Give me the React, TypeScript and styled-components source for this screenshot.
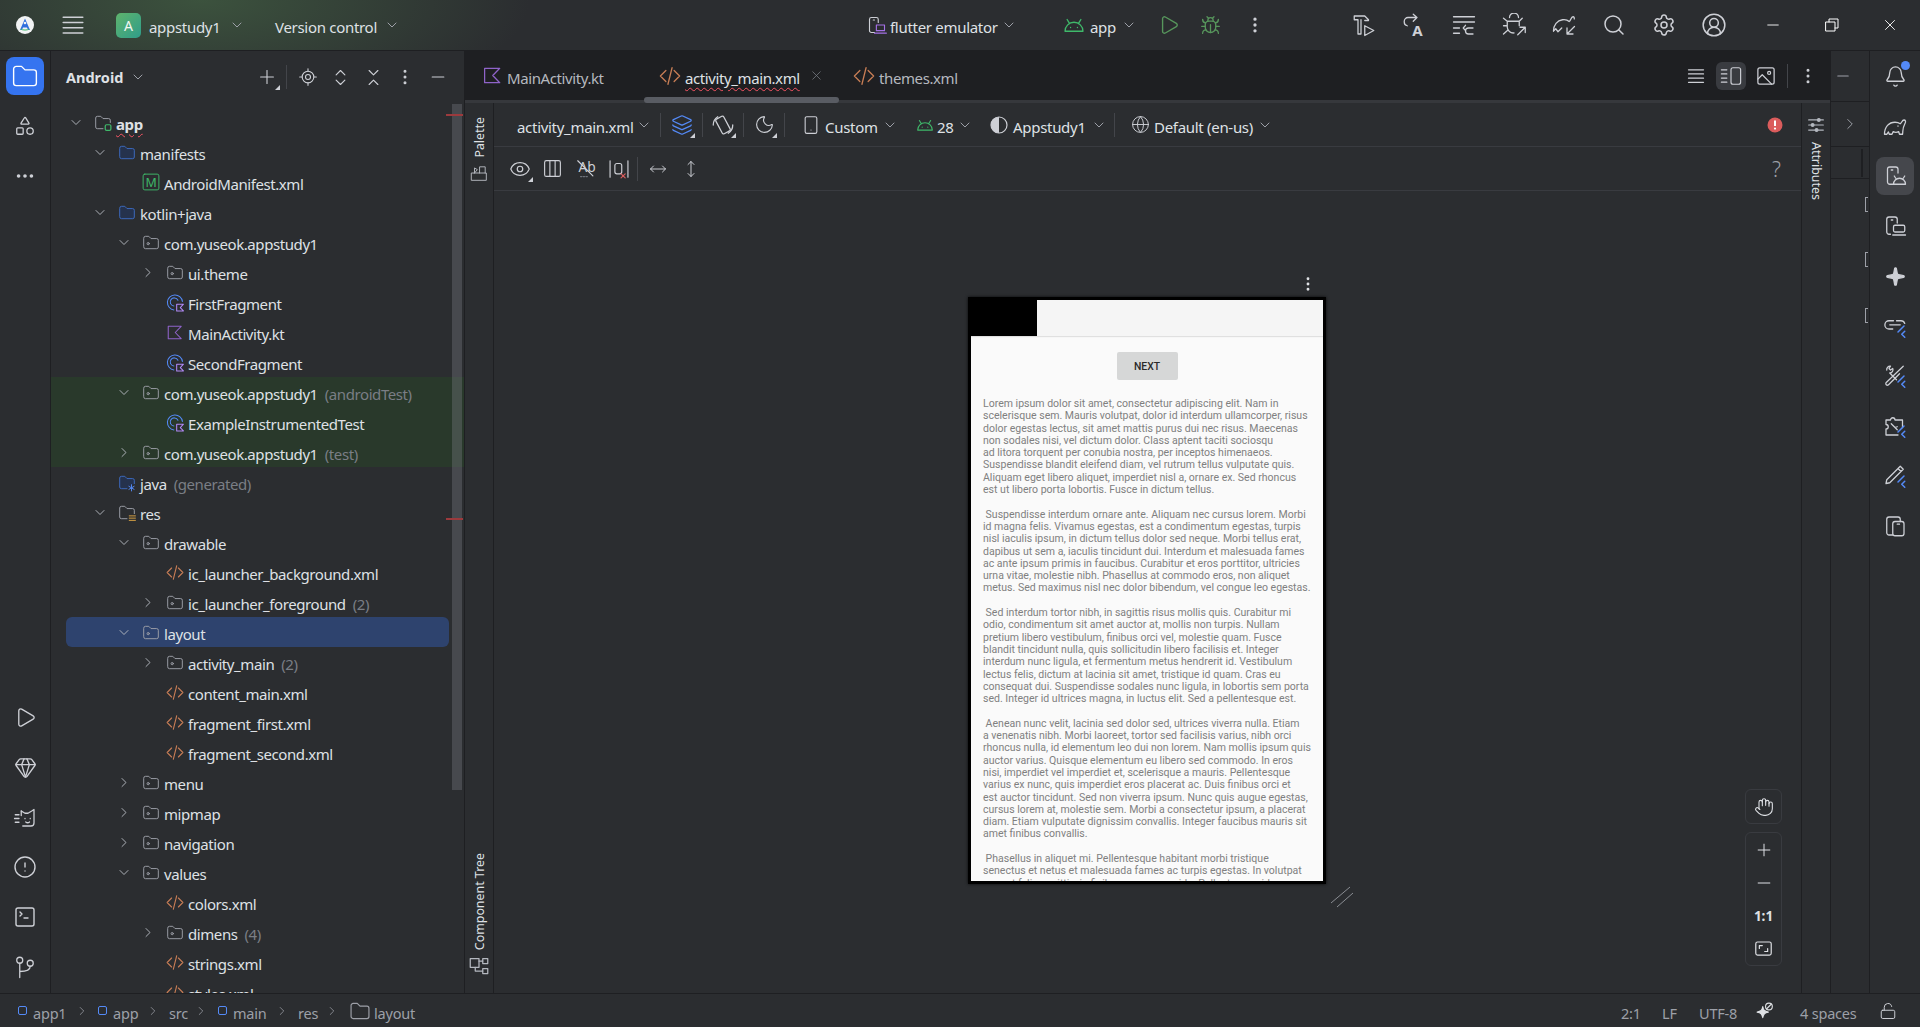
import React from 'react'
import styled, { createGlobalStyle } from 'styled-components'
import {
  Bell, Bug, ChevronDown, ChevronRight, ChevronsDownUp, ChevronsUpDown, CircleAlert, CircleUserRound,
  Columns3, Ellipsis, EllipsisVertical, Eye, Gem, Globe, Hand, Layers, LocateFixed, LockOpen, Minus,
  MoveHorizontal, MoveVertical, Moon, Play, Plus, Search, Settings, Shapes, Smartphone, Sparkle,
  SquareTerminal, X,
} from 'lucide-react'

const GlobalStyle = createGlobalStyle`
  html, body, #root { margin: 0; height: 100%; }
  body {
    background: #2b2d30;
    overflow: hidden;
    font-family: "Noto Sans", "Liberation Sans", sans-serif;
    font-size: 15px;
    color: #dfe1e5;
  }
`

const Window = styled.div`
  display: flex;
  flex-direction: column;
  height: 1027px;
  width: 1920px;
  overflow: hidden;
`
const TitleBar = styled.div`
  height: 50px;
  flex: none;
  display: flex;
  align-items: center;
  border-bottom: 1px solid #1e1f22;
  background:
    radial-gradient(ellipse 330px 120px at 200px 0px, rgba(70, 105, 70, 0.62), rgba(70, 105, 70, 0) 100%),
    #2b2d30;
`
const Cell = styled.div<{ $w: number; $tone?: string }>`
  width: ${p => p.$w}px;
  flex: none;
  height: 100%;
  display: flex;
  align-items: center;
  justify-content: center;
  position: relative;
  color: ${p => p.$tone || '#ced0d6'};
`
const Group = styled.div<{ $w: number; $gap?: number; $pl?: number }>`
  width: ${p => p.$w}px;
  flex: none;
  display: flex;
  align-items: center;
  gap: ${p => p.$gap ?? 6}px;
  padding-left: ${p => p.$pl ?? 0}px;
  box-sizing: border-box;
  white-space: nowrap;
`
const Spacer = styled.div<{ $w?: number }>`
  flex: ${p => (p.$w === undefined ? 1 : 'none')};
  width: ${p => p.$w || 0}px;
`
const Badge = styled.div`
  width: 25px;
  height: 25px;
  border-radius: 5px;
  background: linear-gradient(135deg, #5fb36c, #2f9d8a);
  color: #f2f7f2;
  font-size: 14px;
  display: flex;
  align-items: center;
  justify-content: center;
`
const Label = styled.span`
  color: #dfe1e5;
  position: relative;
  top: 2px;
  font-size: 15px;
  letter-spacing: -0.3px;
`
const HelpMark = styled.span`
  color: #9da0a8;
  font-size: 21px;
  font-weight: 300;
`
const Chevron = styled(ChevronDown).attrs({ size: 16, strokeWidth: 1.5 })`
  color: #9da0a8;
  flex: none;
`
const Main = styled.div`
  flex: 1;
  min-height: 0;
  display: flex;
`
const Rail = styled.div<{ $side: 'left' | 'right' }>`
  width: 50px;
  flex: none;
  display: flex;
  flex-direction: column;
  align-items: center;
  padding-bottom: 1px;
  border-${p => (p.$side === 'left' ? 'right' : 'left')}: 1px solid #1e1f22;
  background: #2b2d30;
  color: #ced0d6;
`
const RailButton = styled.div<{ $active?: 'blue' | 'gray' }>`
  width: 38px;
  height: 38px;
  margin: 6px 0;
  flex: none;
  border-radius: 8px;
  display: flex;
  align-items: center;
  justify-content: center;
  position: relative;
  background: ${p => (p.$active === 'blue' ? '#3574f0' : p.$active === 'gray' ? '#45474c' : 'transparent')};
  color: ${p => (p.$active === 'blue' ? '#fff' : '#ced0d6')};
`
const RailGap = styled.div`
  margin-top: auto;
`
const BellDot = styled.span`
  position: absolute;
  top: 4px;
  right: 4px;
  width: 9px;
  height: 9px;
  border-radius: 50%;
  background: #548af7;
`
const ProjectPanel = styled.div`
  width: 413px;
  flex: none;
  position: relative;
  overflow: hidden;
  border-right: 1px solid #1e1f22;
`
const PanelHeader = styled.div`
  height: 56px;
  display: flex;
  align-items: center;
  padding-bottom: 4px;
  box-sizing: border-box;
  & > div {
    height: 100%;
  }
`
const PanelTitle = styled.div`
  font-weight: 700;
  font-size: 14.5px;
  margin-right: 2px;
`
const Divider = styled.div<{ $h?: number }>`
  width: 1px;
  height: ${p => p.$h ?? 24}px !important;
  flex: none;
  background: #43454a;
`
const Corner = styled.span`
  position: absolute;
  right: 50%;
  bottom: 50%;
  transform: translate(13px, 13px);
  width: 0;
  height: 0;
  border-left: 5px solid transparent;
  border-bottom: 5px solid #ced0d6;
`
const Tree = styled.div`
  display: flex;
  flex-direction: column;
`
const Row = styled.div<{ $level: number; $tone?: 'test' | 'selected' }>`
  height: 30px;
  flex: none;
  display: flex;
  align-items: center;
  box-sizing: border-box;
  padding-left: ${p => 17 + p.$level * 24}px;
  position: relative;
  white-space: nowrap;
  background: ${p => (p.$tone === 'test' ? '#29392b' : 'transparent')};
  &::before {
    content: ${p => (p.$tone === 'selected' ? '""' : 'none')};
    position: absolute;
    left: 15px;
    width: 383px;
    top: 0;
    bottom: 0;
    border-radius: 6px;
    background: #2e436e;
  }
  & > * {
    position: relative;
  }
`
const Twist = styled.span`
  width: 16px;
  flex: none;
  display: flex;
  justify-content: center;
  color: #b4b8bf;
  margin-right: 10px;
`
const NodeIcon = styled.span`
  width: 18px;
  height: 18px;
  flex: none;
  margin-right: 4px;
  display: flex;
  align-items: center;
  justify-content: center;
`
const NodeText = styled.span<{ $bold?: boolean }>`
  font-size: 15px;
  position: relative;
  top: 2px;
  font-weight: ${p => (p.$bold ? 700 : 400)};
  letter-spacing: -0.42px;
  ${p => p.$bold && 'text-decoration: underline wavy #f75464 1px; text-underline-offset: 3px;'}
`
const Hint = styled.span`
  color: #7a7e85;
  margin-left: 7px;
`
const ScrollThumb = styled.div`
  position: absolute;
  left: 401px;
  top: 53px;
  width: 10px;
  height: 686px;
  background: rgba(122, 126, 133, 0.36);
`
const ErrorStripe = styled.div<{ $top: number }>`
  position: absolute;
  left: 395px;
  width: 17px;
  height: 2px;
  top: ${p => p.$top}px;
  background: #9c3a3d;
`
const Editor = styled.div`
  flex: 1;
  min-width: 0;
  display: flex;
  flex-direction: column;
`
const TabBar = styled.div`
  height: 49px;
  flex: none;
  display: flex;
  align-items: center;
  background: #1e1f22;
  padding-left: 17px;
  position: relative;
  border-bottom: 3px solid #36383c;
`
const Tab = styled.div<{ $w: number }>`
  width: ${p => p.$w}px;
  flex: none;
  display: flex;
  align-items: center;
  gap: 4px;
  white-space: nowrap;
  position: relative;
`
const TabText = styled.span<{ $active?: boolean }>`
  color: ${p => (p.$active ? '#dfe1e5' : '#b5b8bf')};
  font-size: 15px;
  letter-spacing: -0.4px;
  position: relative;
  top: 2px;
  ${p => p.$active && 'text-decoration: underline wavy #f75464 1px; text-underline-offset: 3px; margin-right: 5px;'}
`
const TabThumb = styled.div`
  position: absolute;
  left: 179px;
  width: 195px;
  bottom: -3px;
  height: 6px;
  border-radius: 3px;
  background: #595c63;
`
const TabAction = styled.div<{ $active?: boolean }>`
  width: 30px;
  height: 28px;
  flex: none;
  border-radius: 6px;
  margin-right: 5px;
  display: flex;
  align-items: center;
  justify-content: center;
  color: #ced0d6;
  background: ${p => (p.$active ? '#393b40' : 'transparent')};
`
const Designer = styled.div`
  flex: 1;
  min-height: 0;
  display: flex;
`
const SideStrip = styled.div<{ $side: 'left' | 'right' }>`
  width: 29px;
  flex: none;
  display: flex;
  flex-direction: column;
  align-items: center;
  gap: ${p => (p.$side === 'left' ? 6 : 8)}px;
  box-sizing: border-box;
  padding: ${p => (p.$side === 'left' ? '14px 0 17px' : '13px 0')};
  border-${p => (p.$side === 'left' ? 'right' : 'left')}: 1px solid #1e1f22;
  color: #b4b8bf;
`
const VerticalText = styled.div<{ $flip?: boolean }>`
  writing-mode: vertical-rl;
  font-family: "Noto Sans", sans-serif;
  font-size: 12.4px;
  color: #dfe1e5;
  white-space: nowrap;
  ${p => p.$flip && 'transform: rotate(180deg);'}
`
const StripPush = styled.div`
  margin-top: auto;
`
const DesignColumn = styled.div`
  flex: 1;
  min-width: 0;
  display: flex;
  flex-direction: column;
`
const ToolRow = styled.div<{ $h: number; $pl: number }>`
  height: ${p => p.$h}px;
  flex: none;
  display: flex;
  align-items: center;
  padding-left: ${p => p.$pl}px;
  border-bottom: 1px solid #393b40;
  white-space: nowrap;
`
const Canvas = styled.div`
  flex: 1;
  min-height: 0;
  position: relative;
  overflow: hidden;
`
const DeviceFrame = styled.div`
  margin: 106px 0 0 474px;
  width: 352px;
  height: 581px;
  border: 3px solid #000;
  box-shadow: 0 0 3px rgba(0, 0, 0, 0.8);
  background: #fafafa;
  overflow: hidden;
  display: flex;
  flex-direction: column;
`
const AppBar = styled.div`
  height: 36px;
  flex: none;
  background: #f5f5f5;
  box-shadow: 0 1px 1px rgba(0, 0, 0, 0.1);
`
const StatusBlock = styled.div`
  width: 66px;
  height: 100%;
  background: #000;
`
const NextButton = styled.div`
  align-self: center;
  margin-top: 16px;
  width: 61px;
  height: 28px;
  flex: none;
  border-radius: 2px;
  background: #d6d7d7;
  color: #2a2a2a;
  font: 500 10.4px Roboto, sans-serif;
  display: flex;
  align-items: center;
  justify-content: center;
`
const Lorem = styled.div`
  margin: 18px 0 0 12px;
  font: 400 10.54px/12.29px Roboto, sans-serif;
  color: #808080;
  white-space: pre;
`
const DeviceMenu = styled.div`
  position: absolute;
  left: 805px;
  top: 84px;
  color: #dfe1e5;
  display: flex;
`
const ResizeHandle = styled.svg`
  position: absolute;
  left: 836px;
  top: 695px;
`
const ZoomBox = styled.div<{ $top: number }>`
  position: absolute;
  left: 1251px;
  top: ${p => p.$top}px;
  width: 35px;
  border: 1px solid #393b40;
  border-radius: 6px;
  display: flex;
  flex-direction: column;
  align-items: center;
  color: #ced0d6;
`
const ZoomItem = styled.div`
  height: 33px;
  width: 100%;
  display: flex;
  align-items: center;
  justify-content: center;
  font: 700 13.5px "Noto Sans", sans-serif;
  color: #dfe1e5;
`
const HiddenPanel = styled.div`
  width: 38px;
  flex: none;
  display: flex;
  flex-direction: column;
  overflow: hidden;
  color: #9da0a8;
  position: relative;
  border-left: 1px solid #1e1f22;
`
const HiddenCell = styled.div<{ $h: number }>`
  height: ${p => p.$h}px;
  flex: none;
  border-bottom: 1px solid #1e1f22;
  display: flex;
  align-items: center;
  justify-content: center;
`
const HiddenMinus = styled(Minus).attrs({ size: 18, strokeWidth: 1.4 })`
  margin-right: 14px;
`
const GutterBar = styled.div`
  width: 2px;
  height: 28px;
  background: #1e1f22;
  margin-left: 24px;
`
const GutterMark = styled.div<{ $top: number }>`
  position: absolute;
  right: 1px;
  top: ${p => p.$top}px;
  width: 2px;
  height: 13px;
  border: 1px solid #9da0a8;
  border-right: none;
`
const StatusBar = styled.div`
  height: 34px;
  flex: none;
  box-sizing: border-box;
  border-top: 1px solid #1e1f22;
  display: flex;
  align-items: center;
  padding-left: 18px;
  white-space: nowrap;
  color: #9da0a8;
`
const Crumb = styled.div<{ $w: number; $gap?: number }>`
  width: ${p => p.$w}px;
  flex: none;
  display: flex;
  align-items: center;
  gap: ${p => p.$gap ?? 6}px;
`
const ModSquare = styled.span`
  width: 9px;
  height: 9px;
  flex: none;
  box-sizing: border-box;
  border: 1.5px solid #548af7;
  border-radius: 2px;
`
const StatusText = styled.span<{ $w: number }>`
  width: ${p => p.$w}px;
  flex: none;
  position: relative;
  top: 2px;
  font-size: 14.5px;
  letter-spacing: -0.2px;
`

const Svg: React.FC<{ size?: number; children: React.ReactNode; color?: string; sw?: number }> = ({
  size = 21, children, color = 'currentColor', sw = 0.85,
}) => (
  <svg width={size} height={size} viewBox="0 0 16 16" fill="none" stroke={color} strokeWidth={sw} strokeLinecap="round" strokeLinejoin="round">
    {children}
  </svg>
)

const FOLDER = 'M1.5 4A1.5 1.5 0 0 1 3 2.5h3l2 2h5A1.5 1.5 0 0 1 14.5 6v6A1.5 1.5 0 0 1 13 13.5H3A1.5 1.5 0 0 1 1.5 12z'
const ELEPHANT = 'M1 13.5c0-5 3-8 7-8 1.5 0 2.7.4 3.5 1 1-.6 1.2-2.5 2.5-2.5 1 0 1.3 1 .8 2-.8 1.6-1.6 3-1.6 5.5 0 1-.2 2-.2 2h-2l-.6-1.8c-1 .6-2.6.6-3.6 0l-.8 1.8H4.2l-.6-1.6-1 1.6z'

const BlueFolder = () => <Svg color="#3d6bc0"><path d={FOLDER} fill="#25324d" /></Svg>
const PackageFolder = () => <Svg color="#9da0a8"><path d={FOLDER} /><circle cx="5.5" cy="9" r="1" /></Svg>
const ModuleFolder = () => (
  <Svg color="#9da0a8">
    <path d="M8 13.5H3A1.5 1.5 0 0 1 1.5 12V4A1.5 1.5 0 0 1 3 2.5h3l2 2h5A1.5 1.5 0 0 1 14.5 6v2" />
    <rect x="10" y="10" width="5" height="5" rx="1.2" stroke="#3fb96a" strokeWidth="1.1" />
  </Svg>
)
const ResFolder = () => (
  <Svg color="#9da0a8">
    <path d="M8 13.5H3A1.5 1.5 0 0 1 1.5 12V4A1.5 1.5 0 0 1 3 2.5h3l2 2h5A1.5 1.5 0 0 1 14.5 6v3" />
    <path d="M10 11h5.5M10 13h5.5M10 15h5.5" stroke="#d9a343" />
  </Svg>
)
const GeneratedFolder = () => (
  <Svg color="#3d6bc0">
    <path d="M8 13.5H3A1.5 1.5 0 0 1 1.5 12V4A1.5 1.5 0 0 1 3 2.5h3l2 2h5A1.5 1.5 0 0 1 14.5 6v3" fill="#25324d" />
    <path d="M12 10v5.5M9.7 11.4l4.6 2.7M14.3 11.4l-4.6 2.7" stroke="#548af7" />
  </Svg>
)
const KotlinMark: React.FC<{ size?: number }> = ({ size = 21 }) => (
  <Svg size={size} color="#8f63c9" sw={0.95}><path d="M2 2.5h11.5L8.2 8l5.3 5.5H2z" /></Svg>
)
const KotlinClass = () => (
  <Svg color="#548af7" sw={0.95}>
    <path d="M14.6 7A6.7 6.7 0 1 0 7 14.6" />
    <path d="M10.6 6A3.6 3.6 0 1 0 7 11.1" />
    <path d="M9.5 9.5h6l-2.8 3 2.8 3h-6z" stroke="#b189f5" fill="#2b2d30" />
  </Svg>
)
const XmlIcon: React.FC<{ size?: number }> = ({ size = 21 }) => (
  <Svg size={size} color="#c77d55" sw={0.95}>
    <path d="M5 4 1 8l4 4M11 4l4 4-4 4M9.5 2 6.5 14" />
  </Svg>
)
const ManifestIcon = () => (
  <Svg size={18} color="#3fb96a">
    <rect x="1" y="1" width="14" height="14" rx="1.5" />
    <text x="8" y="12" textAnchor="middle" fontSize="11" stroke="none" fill="#3fb96a" fontFamily="Noto Sans">M</text>
  </Svg>
)
const Android: React.FC<{ size?: number }> = ({ size = 22 }) => (
  <Svg size={size} color="#3fb96a" sw={1}>
    <path d="M1.5 12.5a6.5 6.5 0 0 1 13 0zM4.5 6.5 3 4M11.5 6.5 13 4" />
    <path d="M5.5 9.8v.1M10.5 9.8v.1" />
  </Svg>
)
const Logo = () => (
  <svg width="18" height="18" viewBox="0 0 18 18">
    <circle cx="9" cy="9" r="9" fill="#f1f3f4" />
    <path d="M9 2.5 4 14h2l1-2.6h4L12 14h2z" fill="#2f6fdd" />
    <circle cx="9" cy="7" r="1.3" fill="#f1f3f4" />
    <path d="M5 13c1.2 1.4 6.8 1.4 8 0" stroke="#3fb96a" fill="none" />
  </svg>
)
const Hamburger = () => (
  <Svg size={24} sw={1.1}><path d="M1.5 2.8h13M1.5 6.3h13M1.5 9.8h13M1.5 13.3h13" /></Svg>
)
const DeviceManagerIcon = () => (
  <Svg size={24}>
    <path d="M7 13.5H4.5A1.5 1.5 0 0 1 3 12V3.5A1.5 1.5 0 0 1 4.5 2h4A1.5 1.5 0 0 1 10 3.5V6M5.5 4h1" />
    <path d="M7 13.5a4 4 0 0 1 8 0zM8.5 9.5 7.5 8M13.5 9.5l1-1.5" />
  </Svg>
)
const MirrorIcon = () => (
  <Svg size={24}>
    <path d="M5 13.5H4A1.5 1.5 0 0 1 2.5 12V3.5A1.5 1.5 0 0 1 4 2h4a1.5 1.5 0 0 1 1.5 1.5V6M5.5 4h1" />
    <rect x="7" y="7.5" width="7.5" height="4.5" rx="1" />
    <path d="M6.5 14h8.5" />
  </Svg>
)
const BlueTicks = () => <path d="M10 12l4-4M14.5 11.5 12.5 13.5l2 2" stroke="#548af7" strokeWidth="1" />
const LinkTickIcon = () => (
  <Svg size={24}>
    <path d="M7 4.5H4a2.7 2.7 0 0 0 0 5.500h2.500M4.500 7.200h7M9 4.500h3a2.700 2.700 0 0 1 2.500 1.800" />
    <BlueTicks />
  </Svg>
)
const ToolsIcon = () => (
  <Svg size={24}>
    <path d="M13.500 1.500 2 12.500a1.100 1.100 0 0 0 1.500 1.500L11 6.500" />
    <path d="M2.500 4A2.200 2.200 0 0 1 5 1.500L4 3l1 1 1.500-1A2.200 2.200 0 0 1 4.500 6L9 10.500" />
    <BlueTicks />
  </Svg>
)
const PuzzleIcon = () => (
  <Svg size={24}>
    <path d="M2 4h3a1.500 1.500 0 1 1 3 0h5v5M2 4v3a1.500 1.500 0 0 1 0 3v4h8" />
    <path d="M5.500 6.500 8 9l1.500-.5M8 9l1.500 1.500" />
    <BlueTicks />
  </Svg>
)
const PencilIcon = () => (
  <Svg size={24}>
    <path d="M11.500 1.500l2 2L4.500 12.500 2 13l.5-2.500zM10 3l2 2" />
    <BlueTicks />
  </Svg>
)
const PhonesIcon = () => (
  <Svg size={24}>
    <path d="M6.500 14H4a1.500 1.500 0 0 1-1.500-1.500v-9A1.500 1.500 0 0 1 4 2h6a1.500 1.500 0 0 1 1.500 1.500V5" />
    <rect x="6.500" y="5" width="7.500" height="9.500" rx="1.500" />
    <path d="M9.500 6.800h1.500" />
  </Svg>
)
const AbSlash = () => (
  <Svg size={22}>
    <text x="2.500" y="10" fontSize="10" stroke="none" fill="currentColor" fontFamily="Noto Sans">Ab</text>
    <path d="M2 2l11 11" />
    <path d="M4 13.500h6" stroke="#6f737a" strokeDasharray="1 1" />
  </Svg>
)
const SpacingIcon = () => (
  <Svg size={22}>
    <path d="M1.500 2v12M14.500 2v12" />
    <rect x="5" y="4" width="5" height="7.500" rx="1.500" />
    <path d="M9.500 11.500l3 3M12.500 11.500l-3 3" stroke="#db5c5c" />
  </Svg>
)
const RotateIcon = () => (
  <Svg size={24}>
    <rect x="5" y="2.500" width="6" height="11" rx="1" transform="rotate(-28 8 8)" />
    <path d="M1.500 8a6.500 6.500 0 0 1 3-5.500M14.500 8a6.500 6.500 0 0 1-3 5.500" />
  </Svg>
)
const HalfCircle = () => (
  <svg width="18" height="18" viewBox="0 0 18 18">
    <circle cx="9" cy="9" r="8" fill="none" stroke="#ced0d6" strokeWidth="1.2" />
    <path d="M9 1a8 8 0 0 0 0 16z" fill="#ced0d6" />
  </svg>
)
const ErrorDot = () => (
  <svg width="16" height="16" viewBox="0 0 16 16">
    <circle cx="8" cy="8" r="7.5" fill="#db5c5c" />
    <path d="M8 3.5v5.500" stroke="#fff" strokeWidth="2" />
    <circle cx="8" cy="11.6" r="1.1" fill="#fff" />
  </svg>
)
const ListIcon = () => (
  <Svg size={20} sw={1}><path d="M2 3h12M2 6.3h12M2 9.7h12M2 13h12" /></Svg>
)
const SplitIcon = () => (
  <Svg size={22}>
    <path d="M1 3.5h4M1 6.500h4M1 9.500h4M1 12.500h4" />
    <rect x="8" y="2" width="7" height="12" rx="1.5" />
  </Svg>
)
const ImageIcon = () => (
  <Svg size={20} sw={1}>
    <rect x="1.5" y="1.5" width="13" height="13" rx="1.5" />
    <circle cx="10.5" cy="5.5" r="1.2" />
    <path d="M1.5 10.5 5 7l7.500 7.500" />
  </Svg>
)
const StructureCatIcon = () => (
  <Svg size={24}>
    <path d="M5.5 4l2.500 1.500h2L12.500 4 14 3v9a2 2 0 0 1-2 2H6.500" />
    <path d="M5.5 4v3M1.500 6.500H4M1 9H4M1.500 11.500H4" />
    <path d="M8 9v.1M11.500 9v.1M8.500 11.300c.7.600 1.800.600 2.500 0" />
  </Svg>
)
const GitIcon = () => (
  <Svg size={24}>
    <circle cx="4.5" cy="3.5" r="2" />
    <circle cx="11.5" cy="5.5" r="2" />
    <path d="M4.500 5.500V15M4.500 11c4 0 7-.5 7-3.500" />
  </Svg>
)
const HammerRun = () => (
  <Svg size={24}>
    <path d="M1.500 2h7l2.500 2.500V5H8.500M1.500 2v2.500H4v9.500h2V4.500" />
    <path d="M8.500 8.500l6 3.200-6 3.300z" />
  </Svg>
)
const TranslateIcon = () => (
  <Svg size={24}>
    <path d="M3.500 8.500A2.500 2.500 0 0 1 1.500 6V5.500A2.500 2.500 0 0 1 4 3h6M7.500.8 10 3 7.500 5.500" />
    <text x="6.8" y="15" fontSize="10" fontWeight="700" stroke="none" fill="currentColor" fontFamily="Noto Sans">A</text>
  </Svg>
)
const ListUndo = () => (
  <Svg size={24}>
    <path d="M1 2.500h14M1 6h14M1 10h4M1 13.500h4M14 14h-3a2 2 0 0 1 0-4h3M9 8.200 7.500 10 9 11.800" />
  </Svg>
)
const BugArrow = () => (
  <Svg size={24}>
    <path d="M5 3a3 3 0 0 1 6 0M3.500 5.500h8v3M3.500 5.500v4A4 4 0 0 0 8 13.300M1 3.500l2.500 2M1 8.500h2.500M1 14l2.800-2.500M13.500 3.500l-2 2" />
    <path d="M10.500 14.500l5-5M12 9.500h3.500V13" />
  </Svg>
)
const GradleSync = () => (
  <Svg size={24}>
    <path d="M1 12c0-4 2.500-7 6-7.500 2-.3 3.500.3 4.500 1.200 1-.5 1.200-3.200 2.500-3.200.8 0 1 .8.8 1.500" />
    <path d="M1 12l1.500-1.500L4 12.500 6.500 10" />
    <path d="M15 9l-5 5M10 10v4h4" />
  </Svg>
)
const GradleIcon = () => <Svg size={24}><path d={ELEPHANT} /><path d="M10 8v.1" /></Svg>
const PaletteIcon = () => (
  <Svg size={18}>
    <path d="M1.500 8h13v6.500h-13zM4 8V3.500L6.500 5 4 8M8.500 8V2.500h5V8" />
  </Svg>
)
const ComponentTreeIcon = () => (
  <Svg size={20} sw={1}>
    <rect x="1" y="2" width="7" height="7" />
    <rect x="11" y="2" width="4" height="4" />
    <rect x="11" y="10" width="4" height="4" />
    <path d="M8 4h3M5 9v3h6" />
  </Svg>
)
const AttributesIcon = () => (
  <Svg size={18} sw={1.1}>
    <path d="M1.500 3.500h13M1.500 8h13M1.500 12.500h13" />
    <circle cx="10.5" cy="3.5" r="1.2" fill="currentColor" />
    <circle cx="5" cy="8" r="1.2" fill="currentColor" />
    <circle cx="8.5" cy="12.5" r="1.2" fill="currentColor" />
  </Svg>
)
const FitIcon = () => (
  <Svg size={19} sw={1}>
    <rect x="1.5" y="2.5" width="13" height="11" rx="1.5" />
    <path d="M4.500 8V5.500H7M11.500 8v2.500H9" />
  </Svg>
)
const RestoreIcon = () => (
  <Svg size={16} color="#fff" sw={1}>
    <rect x="2" y="5" width="9" height="9" />
    <path d="M5 5V2h9v9h-3" />
  </Svg>
)
const AiOffIcon = () => (
  <Svg size={18} color="#dfe1e5" sw={1}>
    <path d="M6 4c.6 3.400 1.600 4.400 5 5-3.400.6-4.400 1.600-5 5-.6-3.400-1.600-4.400-5-5 3.400-.6 4.400-1.600 5-5z" fill="#dfe1e5" />
    <circle cx="11.5" cy="4" r="3" />
    <path d="M9.500 6l4-4" />
  </Svg>
)

const iconFor = {
  blue: BlueFolder,
  pkg: PackageFolder,
  module: ModuleFolder,
  res: ResFolder,
  gen: GeneratedFolder,
  kclass: KotlinClass,
  kt: KotlinMark,
  xml: XmlIcon,
  manifest: ManifestIcon,
}

type Node = {
  level: number
  label: string
  icon: keyof typeof iconFor
  twist?: 'open' | 'closed'
  hint?: string
  tone?: 'test' | 'selected'
  bold?: boolean
}

const nodes: Node[] = [
  { level: 0, label: 'app', icon: 'module', twist: 'open', bold: true },
  { level: 1, label: 'manifests', icon: 'blue', twist: 'open' },
  { level: 2, label: 'AndroidManifest.xml', icon: 'manifest' },
  { level: 1, label: 'kotlin+java', icon: 'blue', twist: 'open' },
  { level: 2, label: 'com.yuseok.appstudy1', icon: 'pkg', twist: 'open' },
  { level: 3, label: 'ui.theme', icon: 'pkg', twist: 'closed' },
  { level: 3, label: 'FirstFragment', icon: 'kclass' },
  { level: 3, label: 'MainActivity.kt', icon: 'kt' },
  { level: 3, label: 'SecondFragment', icon: 'kclass' },
  { level: 2, label: 'com.yuseok.appstudy1', icon: 'pkg', twist: 'open', hint: '(androidTest)', tone: 'test' },
  { level: 3, label: 'ExampleInstrumentedTest', icon: 'kclass', tone: 'test' },
  { level: 2, label: 'com.yuseok.appstudy1', icon: 'pkg', twist: 'closed', hint: '(test)', tone: 'test' },
  { level: 1, label: 'java', icon: 'gen', hint: '(generated)' },
  { level: 1, label: 'res', icon: 'res', twist: 'open' },
  { level: 2, label: 'drawable', icon: 'pkg', twist: 'open' },
  { level: 3, label: 'ic_launcher_background.xml', icon: 'xml' },
  { level: 3, label: 'ic_launcher_foreground', icon: 'pkg', twist: 'closed', hint: '(2)' },
  { level: 2, label: 'layout', icon: 'pkg', twist: 'open', tone: 'selected' },
  { level: 3, label: 'activity_main', icon: 'pkg', twist: 'closed', hint: '(2)' },
  { level: 3, label: 'content_main.xml', icon: 'xml' },
  { level: 3, label: 'fragment_first.xml', icon: 'xml' },
  { level: 3, label: 'fragment_second.xml', icon: 'xml' },
  { level: 2, label: 'menu', icon: 'pkg', twist: 'closed' },
  { level: 2, label: 'mipmap', icon: 'pkg', twist: 'closed' },
  { level: 2, label: 'navigation', icon: 'pkg', twist: 'closed' },
  { level: 2, label: 'values', icon: 'pkg', twist: 'open' },
  { level: 3, label: 'colors.xml', icon: 'xml' },
  { level: 3, label: 'dimens', icon: 'pkg', twist: 'closed', hint: '(4)' },
  { level: 3, label: 'strings.xml', icon: 'xml' },
  { level: 3, label: 'styles.xml', icon: 'xml' },
]

const loremText = `Lorem ipsum dolor sit amet, consectetur adipiscing elit. Nam in
scelerisque sem. Mauris volutpat, dolor id interdum ullamcorper, risus
dolor egestas lectus, sit amet mattis purus dui nec risus. Maecenas
non sodales nisi, vel dictum dolor. Class aptent taciti sociosqu
ad litora torquent per conubia nostra, per inceptos himenaeos.
Suspendisse blandit eleifend diam, vel rutrum tellus vulputate quis.
Aliquam eget libero aliquet, imperdiet nisl a, ornare ex. Sed rhoncus
est ut libero porta lobortis. Fusce in dictum tellus.

 Suspendisse interdum ornare ante. Aliquam nec cursus lorem. Morbi
id magna felis. Vivamus egestas, est a condimentum egestas, turpis
nisl iaculis ipsum, in dictum tellus dolor sed neque. Morbi tellus erat,
dapibus ut sem a, iaculis tincidunt dui. Interdum et malesuada fames
ac ante ipsum primis in faucibus. Curabitur et eros porttitor, ultricies
urna vitae, molestie nibh. Phasellus at commodo eros, non aliquet
metus. Sed maximus nisl nec dolor bibendum, vel congue leo egestas.

 Sed interdum tortor nibh, in sagittis risus mollis quis. Curabitur mi
odio, condimentum sit amet auctor at, mollis non turpis. Nullam
pretium libero vestibulum, finibus orci vel, molestie quam. Fusce
blandit tincidunt nulla, quis sollicitudin libero facilisis et. Integer
interdum nunc ligula, et fermentum metus hendrerit id. Vestibulum
lectus felis, dictum at lacinia sit amet, tristique id quam. Cras eu
consequat dui. Suspendisse sodales nunc ligula, in lobortis sem porta
sed. Integer id ultrices magna, in luctus elit. Sed a pellentesque est.

 Aenean nunc velit, lacinia sed dolor sed, ultrices viverra nulla. Etiam
a venenatis nibh. Morbi laoreet, tortor sed facilisis varius, nibh orci
rhoncus nulla, id elementum leo dui non lorem. Nam mollis ipsum quis
auctor varius. Quisque elementum eu libero sed commodo. In eros
nisi, imperdiet vel imperdiet et, scelerisque a mauris. Pellentesque
varius ex nunc, quis imperdiet eros placerat ac. Duis finibus orci et
est auctor tincidunt. Sed non viverra ipsum. Nunc quis augue egestas,
cursus lorem at, molestie sem. Morbi a consectetur ipsum, a placerat
diam. Etiam vulputate dignissim convallis. Integer faucibus mauris sit
amet finibus convallis.

 Phasellus in aliquet mi. Pellentesque habitant morbi tristique
senectus et netus et malesuada fames ac turpis egestas. In volutpat
arcu ut felis sagittis, in finibus massa gravida. Pellentesque id`

const crumbs = [
  { text: 'app1', w: 80, mod: true },
  { text: 'app', w: 71, mod: true },
  { text: 'src', w: 49, mod: false },
  { text: 'main', w: 80, mod: true },
  { text: 'res', w: 51, mod: false },
]

const App: React.FC = () => {
  return (
    <Window>
      <GlobalStyle />
      <TitleBar>
        <Cell $w={50}><Logo /></Cell>
        <Cell $w={46}><Hamburger /></Cell>
        <Spacer $w={20} />
        <Group $w={159} $gap={8}>
          <Badge>A</Badge>
          <Label>appstudy1</Label>
          <Chevron />
        </Group>
        <Group $w={592} $gap={7}>
          <Label>Version control</Label>
          <Chevron />
        </Group>
        <Group $w={196} $gap={3}>
          <Svg size={20} sw={0.9}>
            <path d="M6 14H3.500A1.500 1.500 0 0 1 2 12.500v-9A1.500 1.500 0 0 1 3.500 2h4A1.500 1.500 0 0 1 9 3.500V6M5 4h1" stroke="#ced0d6" />
            <path d="M7.500 8h6.500v4.500H7.500zM6 14.500h9.500" stroke="#a571e6" />
          </Svg>
          <Label>flutter emulator</Label>
          <Chevron />
        </Group>
        <Group $w={95} $gap={5}>
          <Android />
          <Label>app</Label>
          <Chevron />
        </Group>
        <Group $w={42} $gap={0}>
          <Play size={22} strokeWidth={1.5} color="#57965c" />
        </Group>
        <Group $w={35} $gap={0}>
          <Bug size={21} strokeWidth={1.5} color="#57965c" />
        </Group>
        <Cell $w={40}><EllipsisVertical size={20} strokeWidth={2} /></Cell>
        <Spacer />
        <Cell $w={50}><HammerRun /></Cell>
        <Cell $w={50}><TranslateIcon /></Cell>
        <Cell $w={50}><ListUndo /></Cell>
        <Cell $w={50}><BugArrow /></Cell>
        <Cell $w={50}><GradleSync /></Cell>
        <Cell $w={50}><Search size={24} strokeWidth={1.5} /></Cell>
        <Cell $w={50}><Settings size={24} strokeWidth={1.5} /></Cell>
        <Cell $w={50}><CircleUserRound size={26} strokeWidth={1.4} /></Cell>
        <Spacer $w={4} />
        <Cell $w={60} $tone="#fff"><Minus size={18} strokeWidth={1.2} /></Cell>
        <Cell $w={58} $tone="#fff"><RestoreIcon /></Cell>
        <Cell $w={58} $tone="#fff"><X size={18} strokeWidth={1.2} /></Cell>
        <Spacer $w={1} />
      </TitleBar>

      <Main>
        <Rail $side="left">
          <RailButton $active="blue">
            <Svg size={28} sw={0.8}><path d={FOLDER} /></Svg>
          </RailButton>
          <RailButton><Shapes size={22} strokeWidth={1.4} /></RailButton>
          <RailButton><Ellipsis size={22} strokeWidth={2} /></RailButton>
          <RailGap />
          <RailButton><Play size={23} strokeWidth={1.4} /></RailButton>
          <RailButton><Gem size={23} strokeWidth={1.4} /></RailButton>
          <RailButton><StructureCatIcon /></RailButton>
          <RailButton><CircleAlert size={24} strokeWidth={1.4} /></RailButton>
          <RailButton><SquareTerminal size={24} strokeWidth={1.4} /></RailButton>
          <RailButton><GitIcon /></RailButton>
        </Rail>

        <ProjectPanel>
          <PanelHeader>
            <Group $w={200} $gap={5} $pl={15}>
              <PanelTitle>Android</PanelTitle>
              <Chevron />
            </Group>
            <Cell $w={32}>
              <Plus size={22} strokeWidth={1.2} />
              <Corner />
            </Cell>
            <Spacer $w={3} />
            <Divider />
            <Cell $w={42}><LocateFixed size={20} strokeWidth={1.3} /></Cell>
            <Cell $w={22}><ChevronsUpDown size={21} strokeWidth={1.3} /></Cell>
            <Cell $w={44}><ChevronsDownUp size={21} strokeWidth={1.3} /></Cell>
            <Cell $w={20}><EllipsisVertical size={20} strokeWidth={1.6} /></Cell>
            <Cell $w={46}><Minus size={20} strokeWidth={1.3} /></Cell>
          </PanelHeader>
          <Tree>
            {nodes.map((n, i) => {
              const NodeGlyph = iconFor[n.icon]
              return (
                <Row key={i} $level={n.level} $tone={n.tone}>
                  <Twist>
                    {n.twist === 'open' && <ChevronDown size={17} strokeWidth={1.4} />}
                    {n.twist === 'closed' && <ChevronRight size={17} strokeWidth={1.4} />}
                  </Twist>
                  <NodeIcon><NodeGlyph /></NodeIcon>
                  <NodeText $bold={n.bold}>
                    {n.label}
                    {n.hint && <Hint>{n.hint}</Hint>}
                  </NodeText>
                </Row>
              )
            })}
          </Tree>
          <ScrollThumb />
          <ErrorStripe $top={63} />
          <ErrorStripe $top={467} />
        </ProjectPanel>

        <Editor>
          <TabBar>
            <Tab $w={177}>
              <KotlinMark />
              <TabText>MainActivity.kt</TabText>
            </Tab>
            <Tab $w={194}>
              <XmlIcon size={22} />
              <TabText $active>activity_main.xml</TabText>
              <X size={15} strokeWidth={1.2} color="#7a7e85" />
            </Tab>
            <Tab $w={120}>
              <XmlIcon size={22} />
              <TabText>themes.xml</TabText>
            </Tab>
            <TabThumb />
            <Spacer />
            <TabAction><ListIcon /></TabAction>
            <TabAction $active><SplitIcon /></TabAction>
            <TabAction><ImageIcon /></TabAction>
            <Spacer $w={1} />
            <Divider $h={24} />
            <Cell $w={40}><EllipsisVertical size={20} strokeWidth={1.6} /></Cell>
            <Spacer $w={2} />
          </TabBar>
          <Designer>
            <SideStrip $side="left">
              <VerticalText $flip>Palette</VerticalText>
              <PaletteIcon />
              <StripPush />
              <VerticalText $flip>Component Tree</VerticalText>
              <ComponentTreeIcon />
            </SideStrip>
            <DesignColumn>
              <ToolRow $h={43} $pl={23}>
                <Group $w={143} $gap={3}>
                  <Label>activity_main.xml</Label>
                  <Chevron />
                </Group>
                <Divider />
                <Cell $w={41} $tone="#548af7"><Layers size={22} strokeWidth={1.4} /><Corner /></Cell>
                <Divider />
                <Cell $w={40}><RotateIcon /><Corner /></Cell>
                <Divider />
                <Cell $w={40}><Moon size={21} strokeWidth={1.3} /><Corner /></Cell>
                <Divider />
                <Group $w={131} $gap={4} $pl={16}>
                  <Smartphone size={20} strokeWidth={1.3} color="#ced0d6" />
                  <Label>Custom</Label>
                  <Chevron />
                </Group>
                <Group $w={74} $gap={3}>
                  <Android size={18} />
                  <Label>28</Label>
                  <Chevron />
                </Group>
                <Group $w={124} $gap={5}>
                  <HalfCircle />
                  <Label>Appstudy1</Label>
                  <Chevron />
                </Group>
                <Divider />
                <Group $w={190} $gap={4} $pl={16}>
                  <Globe size={19} strokeWidth={1.2} color="#ced0d6" />
                  <Label>Default (en-us)</Label>
                  <Chevron />
                </Group>
                <Spacer />
                <ErrorDot />
                <Spacer $w={18} />
              </ToolRow>
              <ToolRow $h={43} $pl={9}>
                <Cell $w={33}><Eye size={22} strokeWidth={1.3} /><Corner /></Cell>
                <Cell $w={33}><Columns3 size={21} strokeWidth={1.3} /></Cell>
                <Cell $w={33}><AbSlash /></Cell>
                <Cell $w={33}><SpacingIcon /></Cell>
                <Spacer $w={2} />
                <Divider />
                <Spacer $w={3} />
                <Cell $w={33}><MoveHorizontal size={18} strokeWidth={1.3} /></Cell>
                <Cell $w={33}><MoveVertical size={18} strokeWidth={1.3} /></Cell>
                <Spacer />
                <HelpMark>?</HelpMark>
                <Spacer $w={20} />
              </ToolRow>
              <Canvas>
                <DeviceMenu><EllipsisVertical size={18} strokeWidth={1.8} /></DeviceMenu>
                <DeviceFrame>
                  <AppBar><StatusBlock /></AppBar>
                  <NextButton>NEXT</NextButton>
                  <Lorem>{loremText}</Lorem>
                </DeviceFrame>
                <ResizeHandle width="24" height="22" viewBox="0 0 24 22">
                  <path d="M1 17 20 1M7 21 23 7" stroke="#8a8d93" strokeWidth="1" fill="none" />
                </ResizeHandle>
                <ZoomBox $top={598}>
                  <ZoomItem><Hand size={20} strokeWidth={1.3} /></ZoomItem>
                </ZoomBox>
                <ZoomBox $top={641}>
                  <ZoomItem><Plus size={20} strokeWidth={1.2} /></ZoomItem>
                  <ZoomItem><Minus size={20} strokeWidth={1.2} /></ZoomItem>
                  <ZoomItem>1:1</ZoomItem>
                  <ZoomItem><FitIcon /></ZoomItem>
                </ZoomBox>
              </Canvas>
            </DesignColumn>
            <SideStrip $side="right">
              <AttributesIcon />
              <VerticalText>Attributes</VerticalText>
            </SideStrip>
          </Designer>
        </Editor>

        <HiddenPanel>
          <HiddenCell $h={50}><HiddenMinus /></HiddenCell>
          <HiddenCell $h={44}><ChevronRight size={18} strokeWidth={1.3} /></HiddenCell>
          <HiddenCell $h={31}><GutterBar /></HiddenCell>
          <GutterMark $top={146} />
          <GutterMark $top={201} />
          <GutterMark $top={257} />
        </HiddenPanel>

        <Rail $side="right">
          <RailButton><Bell size={23} strokeWidth={1.4} /><BellDot /></RailButton>
          <RailButton><GradleIcon /></RailButton>
          <RailButton $active="gray"><DeviceManagerIcon /></RailButton>
          <RailButton><MirrorIcon /></RailButton>
          <RailButton><Sparkle size={21} strokeWidth={1.4} fill="#ced0d6" /></RailButton>
          <RailButton><LinkTickIcon /></RailButton>
          <RailButton><ToolsIcon /></RailButton>
          <RailButton><PuzzleIcon /></RailButton>
          <RailButton><PencilIcon /></RailButton>
          <RailButton><PhonesIcon /></RailButton>
        </Rail>
      </Main>

      <StatusBar>
        {crumbs.map(c => (
          <Crumb key={c.text} $w={c.w}>
            {c.mod && <ModSquare />}
            <StatusText $w={c.mod ? c.w - 44 : c.w - 30}>{c.text}</StatusText>
            <ChevronRight size={14} strokeWidth={1.3} />
          </Crumb>
        ))}
        <Crumb $w={80} $gap={3}>
          <Svg size={22} color="#9da0a8"><path d={FOLDER} /></Svg>
          <StatusText $w={50}>layout</StatusText>
        </Crumb>
        <Spacer />
        <StatusText $w={41}>2:1</StatusText>
        <StatusText $w={37}>LF</StatusText>
        <StatusText $w={46}>UTF-8</StatusText>
        <Cell $w={40}><AiOffIcon /></Cell>
        <Spacer $w={15} />
        <StatusText $w={69}>4 spaces</StatusText>
        <Cell $w={38}><LockOpen size={18} strokeWidth={1.3} color="#ced0d6" /></Cell>
        <Spacer $w={13} />
      </StatusBar>
    </Window>
  )
}

export default App
